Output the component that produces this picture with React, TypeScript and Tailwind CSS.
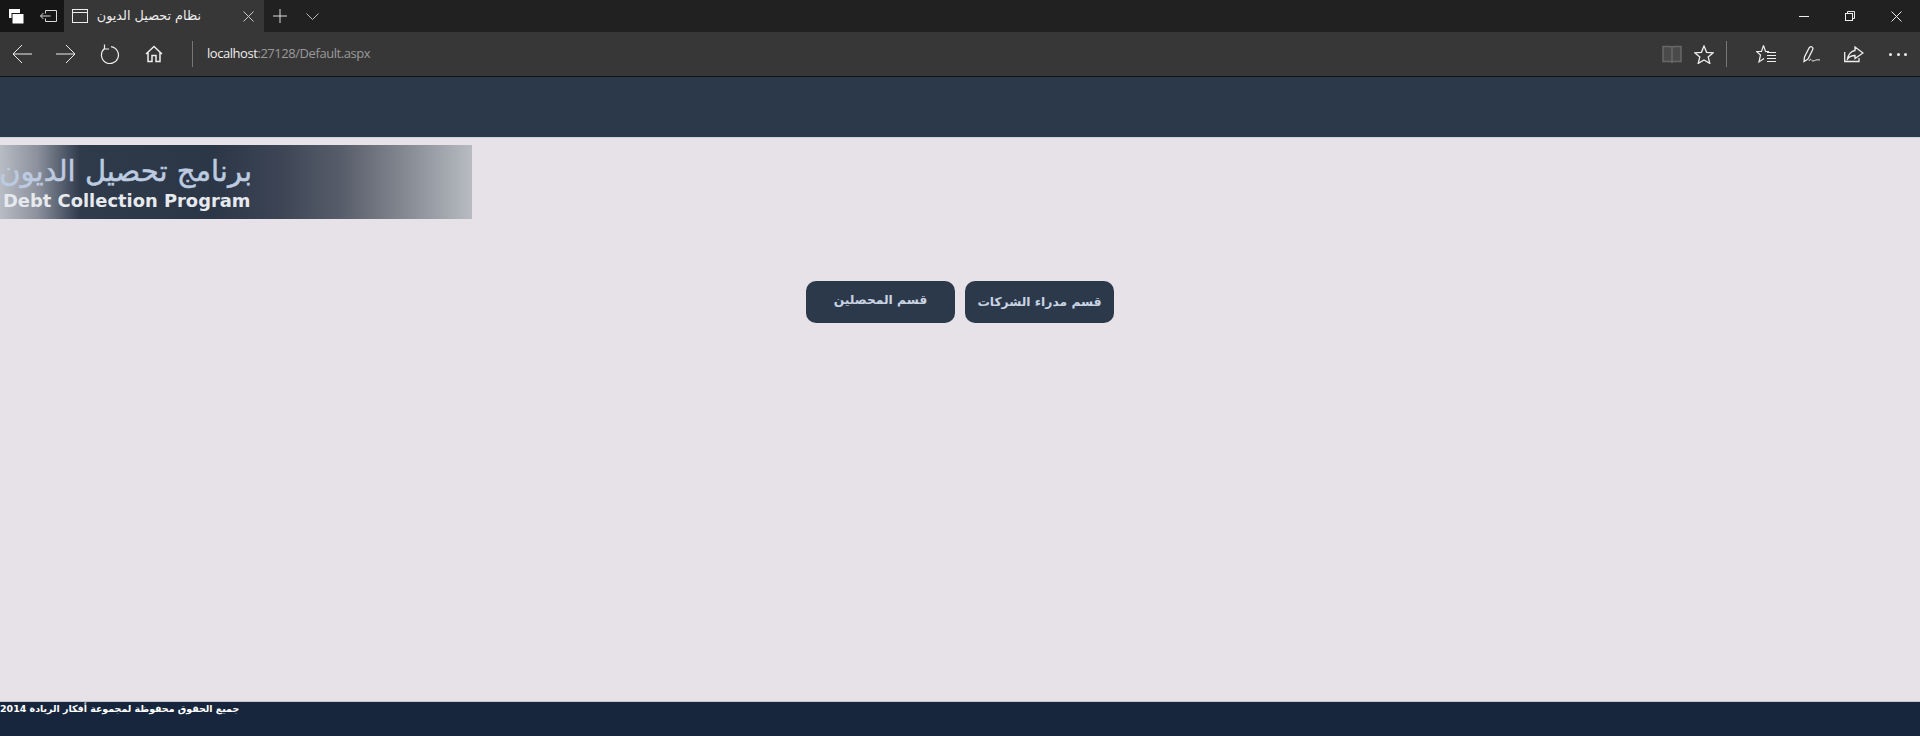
const stroke = '#eeeeee';

const TabStrip = () => (
  <div className="flex h-8 items-stretch bg-[#212121] text-white">
    <div className="flex w-8 items-center justify-center bg-[#161616]">
      <svg width="15" height="15" viewBox="0 0 15 15" fill="#fff">
        <rect x="0" y="0" width="11" height="9" />
        <rect x="3" y="4.500" width="12" height="10.500" stroke="#161616" />
      </svg>
    </div>
    <div className="flex w-8 items-center justify-center bg-[#161616]">
      <svg width="17" height="13" viewBox="0 0 17 13" fill="none" stroke="#d8d8d8">
        <path d="M5.500 3.500V.5h11v11h-11v-3" />
        <path d="M.5 6h10M3.500 3L.5 6l3 3" />
      </svg>
    </div>
    <div className="flex w-[200px] items-center bg-[#373737] pl-2">
      <svg width="16" height="14" viewBox="0 0 16 14" fill="none" stroke="#eeeeee">
        <rect x="0.500" y="0.500" width="15" height="13" />
        <path d="M.5 3.500h15" />
      </svg>
      <span dir="rtl" className="ml-[9px] w-[104px] whitespace-nowrap text-[12.800px] text-[#eeeeee] [font-family:'DejaVu_Sans',sans-serif]">
        نظام تحصيل الديون
      </span>
      <svg className="ml-[42px]" width="11" height="11" viewBox="0 0 11 11" fill="none" stroke="#c8c8c8">
        <path d="M.5.5l10 10M10.500.5l-10 10" />
      </svg>
    </div>
    <div className="ml-[9px] flex items-center">
      <svg width="14" height="14" viewBox="0 0 14 14" fill="none" stroke="#dddddd">
        <path d="M7 0v14M0 7h14" />
      </svg>
    </div>
    <div className="ml-[19px] flex items-center">
      <svg width="13" height="7" viewBox="0 0 13 7" fill="none" stroke="#bbbbbb">
        <path d="M.5.5l6 6 6-6" />
      </svg>
    </div>
    <div className="ml-auto flex items-center gap-9 pr-[18px]">
      <svg width="10" height="1" viewBox="0 0 10 1" stroke={stroke}>
        <path d="M0 .5h10" />
      </svg>
      <svg width="10" height="10" viewBox="0 0 10 10" fill="none" stroke={stroke}>
        <rect x="0.500" y="2.500" width="7" height="7" />
        <path d="M2.500 2.500v-2h7v7h-2" />
      </svg>
      <svg width="11" height="11" viewBox="0 0 11 11" fill="none" stroke={stroke}>
        <path d="M.5.5l10 10M10.500.5l-10 10" />
      </svg>
    </div>
  </div>
);

const Toolbar = () => (
  <div className="flex h-[45px] items-center border-b border-[#10151c] bg-[#373737]">
    <div className="flex items-center pl-[12px]">
      <svg width="20" height="20" viewBox="0 0 20 20" fill="none" stroke={stroke}>
        <path d="M20 10H1M10 1l-9 9 9 9" />
      </svg>
      <svg className="ml-[24px]" width="20" height="20" viewBox="0 0 20 20" fill="none" stroke={stroke}>
        <path d="M0 10h19M10 1l9 9-9 9" />
      </svg>
      <svg className="ml-[24px]" width="20" height="20" viewBox="0 0 20 20" fill="none" stroke={stroke} strokeWidth="1.200">
        <path d="M11 2.600A8.500 8.500 0 1 1 4.500 4.500" />
        <path d="M4.500.5V5H9" />
      </svg>
      <svg className="ml-[25px]" width="18" height="18" viewBox="0 0 18 18" fill="none" stroke={stroke} strokeWidth="1.500">
        <path d="M1 9l8-7.500L17 9M3 7.500V16.500h4V10.500h4v6h4V7.500" />
      </svg>
    </div>
    <div className="ml-[29px] h-[26px] w-px bg-[#777777]" />
    <div className="ml-[14px] text-[13px] tracking-[-0.450px] [font-family:'Open_Sans',sans-serif]">
      <span className="text-[#eeeeee]">localhost</span>
      <span className="text-[#9a9a9a]">:27128/Default.aspx</span>
    </div>
    <div className="ml-auto flex items-center pr-[13px]">
      <svg width="20" height="19" viewBox="0 0 20 19" fill="#4a4a4a" stroke="#686868" strokeWidth="1.500">
        <path d="M1 1.500h7.500c1 0 1.500.5 1.500 1.500 0-1 .5-1.500 1.500-1.500H19v15h-8l-1 1-1-1H1zM10 3v14" />
      </svg>
      <svg className="ml-[12px]" width="20" height="19" viewBox="0 0 20 19" fill="none" stroke={stroke} strokeWidth="1.300">
        <path d="M10 1l2.600 6.300 6.700.5-5.100 4.200 1.600 6.400L10 14.900 4.200 18.400 5.800 12 .7 7.800l6.700-.5z" />
      </svg>
      <div className="ml-[12px] h-[26px] w-px bg-[#777777]" />
      <svg className="ml-[29px]" width="20" height="20" viewBox="0 0 20 20" fill="none" stroke={stroke} strokeWidth="1.200">
        <path d="M7.500 1.500L5.500 7.500H.5L4.500 11 3 18l5-3.500M7.500 1.500l2 6H13" />
        <path d="M11 8.500h9M11 11.500h9M11 14.500h9M11 17.500h9" />
      </svg>
      <svg className="ml-[27px]" width="17" height="17" viewBox="0 0 17 17" fill="none" stroke={stroke} strokeWidth="1.300">
        <path d="M1 15.500L1.500 11 6 2Q7.500 0 9 1q1.500 1 .5 3L5 13z" />
        <path d="M6 15c2-4 2 0 4 0s3-2 7-1" strokeWidth="1" />
      </svg>
      <svg className="ml-[24px]" width="20" height="17" viewBox="0 0 20 17" fill="none" stroke={stroke} strokeWidth="1.300">
        <path d="M.7 6v9.500H15V12" />
        <path d="M11 1l8 6-8 5.500v-3c-4 0-6 1.500-7.500 3.500C4 9 7 5 11 4.500z" />
      </svg>
      <div className="ml-[25px] flex w-[18px] justify-between">
        <span className="h-[3px] w-[3px] rounded-full bg-[#eeeeee]" />
        <span className="h-[3px] w-[3px] rounded-full bg-[#eeeeee]" />
        <span className="h-[3px] w-[3px] rounded-full bg-[#eeeeee]" />
      </div>
    </div>
  </div>
);

const SectionButton = ({ label, lifted }: { label: string; lifted?: boolean }) => (
  <button
    className={`flex h-[42px] w-[149px] items-center justify-center rounded-[10px] bg-[#2c394b] text-[12.300px] font-bold text-[#c9d3e2] [font-family:'DejaVu_Sans',sans-serif] ${lifted ? 'pb-[4px]' : ''}`}
  >
    {label}
  </button>
);

export default function App() {
  return (
    <div className="flex h-[736px] flex-col overflow-hidden bg-[#e6e2e8]">
      <TabStrip />
      <Toolbar />
      <div className="h-[61px] border-b border-[#d0d3d9] bg-[#2c394b]" />

      <main className="flex-1">
        <div className="mt-[7px] flex h-[74px] w-[472px] flex-col bg-[linear-gradient(90deg,#b8bcc4_0%,#8b909c_8%,#2f3a4b_17%,#2b3647_45%,#3e4656_60%,#565c69_72%,#82868f_85%,#b8bbc2_100%)]">
          <div dir="rtl" className="mt-[7px] h-[38px] w-[252px] overflow-hidden whitespace-nowrap text-[29px] leading-[38px] text-[#bccbe0] [-webkit-text-stroke:0.5px_#bccbe0] [font-family:'DejaVu_Sans',serif]">
            برنامج تحصيل الديون
          </div>
          <div className="ml-[3px] text-[17.900px] leading-[22px] font-bold text-[#e6e9ee] [font-family:'DejaVu_Sans',sans-serif]">
            Debt Collection Program
          </div>
        </div>

        <div dir="rtl" className="mt-[62px] flex justify-center gap-[10px]">
          <SectionButton label="قسم مدراء الشركات" />
          <SectionButton label="قسم المحصلين" lifted />
        </div>
      </main>

      <footer className="h-[35px] border-t border-[#c2c5cc] bg-[#17253d]">
        <div className="text-[9.450px] leading-[13px] font-bold text-white [font-family:'DejaVu_Sans',sans-serif]">
          <span dir="rtl">جميع الحقوق محفوظة لمجموعة أفكار الريادة 2014</span>
        </div>
      </footer>
    </div>
  );
}
